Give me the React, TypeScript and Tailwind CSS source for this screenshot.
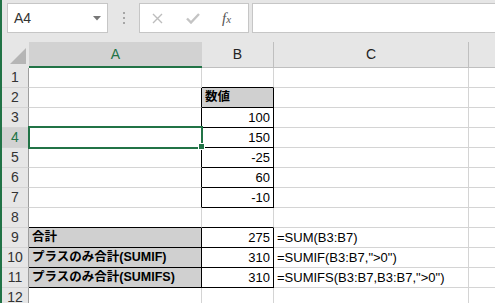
import React from 'react'

type Cell = { text?: string; bold?: boolean; fill?: boolean; align?: 'left' | 'right' }

const rows: Record<number, Record<number, Cell>> = {
  2: { 2: { text: '数値', bold: true, fill: true } },
  3: { 2: { text: '100', align: 'right' } },
  4: { 2: { text: '150', align: 'right' } },
  5: { 2: { text: '-25', align: 'right' } },
  6: { 2: { text: '60', align: 'right' } },
  7: { 2: { text: '-10', align: 'right' } },
  9: {
    1: { text: '合計', bold: true, fill: true },
    2: { text: '275', align: 'right' },
    3: { text: '=SUM(B3:B7)' },
  },
  10: {
    1: { text: 'プラスのみ合計(SUMIF)', bold: true, fill: true },
    2: { text: '310', align: 'right' },
    3: { text: '=SUMIF(B3:B7,">0")' },
  },
  11: {
    1: { text: 'プラスのみ合計(SUMIFS)', bold: true, fill: true },
    2: { text: '310', align: 'right' },
    3: { text: '=SUMIFS(B3:B7,B3:B7,">0")' },
  },
}

// セル範囲の黒い罫線
const boxed = (r: number, c: number) =>
  (c === 2 && r >= 2 && r <= 7) || ((c === 1 || c === 2) && r >= 9 && r <= 11)

const rowNums = [1, 2, 3, 4, 5, 6, 7, 8, 9, 10, 11, 12]
const cols = [1, 2, 3, 4]

function FormulaBar() {
  return (
    <div className="flex h-[42px] pt-[3px] pl-[5px]">
      <div className="w-[101px] h-[30px] bg-white border border-[#c6c6c6] flex items-center justify-between pl-[6px] pr-[6px]">
        <span className="text-[14px] text-[#333]">A4</span>
        <svg width="8" height="5" viewBox="0 0 8 5">
          <polygon points="0,0 8,0 4,4.5" fill="#777" />
        </svg>
      </div>
      <div className="w-[31px] h-[30px] flex flex-col items-center justify-center gap-[3px]">
        <div className="w-[2px] h-[2px] bg-[#a6a6a6]" />
        <div className="w-[2px] h-[2px] bg-[#a6a6a6]" />
        <div className="w-[2px] h-[2px] bg-[#a6a6a6]" />
      </div>
      <div className="w-[110px] h-[30px] bg-white border border-[#c6c6c6] flex items-center">
        <svg className="ml-[12px]" width="11" height="11" viewBox="0 0 11 11">
          <path d="M1 1 L10 10 M10 1 L1 10" stroke="#bdbdbd" strokeWidth="1.4" fill="none" />
        </svg>
        <svg className="ml-[23px]" width="14" height="11" viewBox="0 0 14 11">
          <path d="M1 5.5 L5 9.5 L13 1" stroke="#c4c4c4" strokeWidth="2.4" fill="none" />
        </svg>
        <span className="ml-[22px] text-[#555] italic leading-none" style={{ fontFamily: '"Liberation Serif", serif' }}>
          <span className="text-[15px]">f</span>
          <span className="text-[11px]">x</span>
        </span>
      </div>
      <div className="ml-[3px] flex-1 h-[30px] bg-white border border-r-0 border-[#c6c6c6]" />
    </div>
  )
}

function ColumnHeaders() {
  return (
    <>
      <div className="h-[26px] bg-[#e6e6e6] border-r border-[#e6e6e6] relative">
        <svg className="absolute left-0 top-0" width="27" height="26" viewBox="0 0 27 26">
          <polygon points="24,6 24,22 8,22" fill="#b5b5b5" />
        </svg>
      </div>
      <div className="h-[26px] bg-[#d2d2d2] border-b-2 border-[#217346] flex items-center justify-center text-[14px] text-[#217346]">
        A
      </div>
      <div className="h-[26px] bg-[#e6e6e6] border-b border-r border-[#bfbfbf] flex items-center justify-center text-[14px] text-[#222]">
        B
      </div>
      <div className="h-[26px] bg-[#e6e6e6] border-b border-r border-[#bfbfbf] flex items-center justify-center text-[14px] text-[#222]">
        C
      </div>
      <div className="h-[26px] bg-[#e6e6e6] border-b border-[#bfbfbf]" />
    </>
  )
}

function GridCell({ r, c }: { r: number; c: number }) {
  const cell = rows[r]?.[c]
  const rightBlack = boxed(r, c) || boxed(r, c + 1)
  const bottomBlack = boxed(r, c) || boxed(r + 1, c)
  return (
    <div
      className={[
        'h-[20px] border-r border-b flex items-center px-[3px] text-black whitespace-nowrap',
        rightBlack ? 'border-r-black' : 'border-r-[#d4d4d4]',
        bottomBlack ? 'border-b-black' : 'border-b-[#d4d4d4]',
        cell?.fill ? 'bg-[#d0d0d0]' : 'bg-white',
        cell?.bold ? 'font-bold text-[12.5px]' : 'text-[13px]',
        cell?.align === 'right' ? 'justify-end' : 'justify-start',
      ].join(' ')}
    >
      {cell?.text}
    </div>
  )
}

export default function App() {
  return (
    <div
      className="w-[495px] h-[303px] overflow-hidden bg-[#e6e6e6] border-l-2 border-[#217346]"
      style={{ fontFamily: '"Liberation Sans", "Noto Sans CJK JP", sans-serif' }}
    >
      <FormulaBar />
      <div className="relative grid grid-cols-[27px_173px_72px_195px_60px]">
        <ColumnHeaders />
        {rowNums.map((r) => (
          <React.Fragment key={r}>
            <div
              className={
                r === 4
                  ? 'h-[20px] bg-[#d2d2d2] border-r border-b border-r-[#9e9e9e] border-b-[#d4d4d4] flex items-center justify-center text-[14px] text-[#217346]'
                  : 'h-[20px] bg-[#e6e6e6] border-r border-b border-r-[#9e9e9e] border-b-[#d4d4d4] flex items-center justify-center text-[14px] text-[#333]'
              }
            >
              {r}
            </div>
            {cols.map((c) => (
              <GridCell key={c} r={r} c={c} />
            ))}
          </React.Fragment>
        ))}
        {/* 選択セル A4 */}
        <div className="absolute left-[26px] top-[84px] w-[175px] h-[23px] border-2 border-[#217346]" />
        <div className="absolute left-[196px] top-[101px] w-[7px] h-[7px] bg-[#217346] border border-white" />
      </div>
    </div>
  )
}
